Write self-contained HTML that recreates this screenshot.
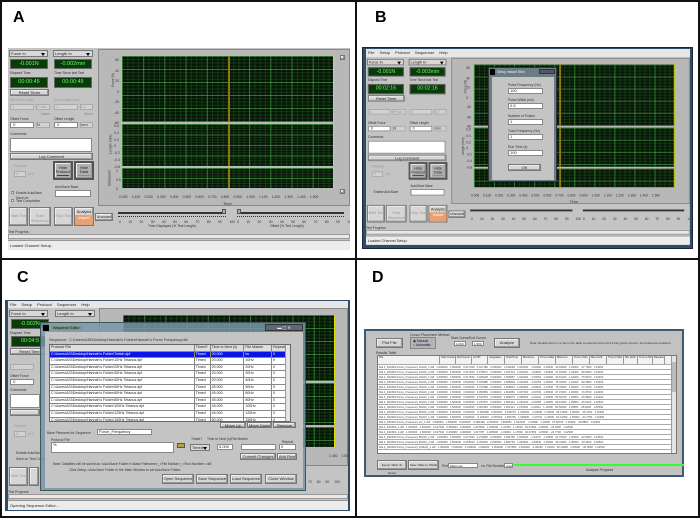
<!DOCTYPE html>
<html><head><meta charset="utf-8">
<style>
*{box-sizing:border-box;margin:0;padding:0}
body{width:700px;height:518px;background:#fff;position:relative;overflow:hidden;font-family:"Liberation Sans",sans-serif;color:#222}
.a{position:absolute}
.L{position:absolute;font-weight:bold;font-size:16px;color:#000}
.lv{position:absolute;width:342px;height:202px;background:#c4c4c4;font-size:3.4px;transform-origin:0 0;overflow:hidden}
.dd{position:absolute;background:#d8d8d8;border:1px solid #777;height:7px;font-size:4px;padding-left:1px;line-height:5px}
.dd:after{content:"";position:absolute;right:2px;top:1.5px;border:2px solid transparent;border-top:3px solid #000}
.g{position:absolute;background:#0b3a0b;border:1px solid #666;color:#6f6;font-size:5.5px;text-align:center;line-height:9px}
.bt{position:absolute;background:#d6d6d6;border:1px solid #777;text-align:center;font-size:4px;box-shadow:inset -1px -1px #999,inset 1px 1px #eee}
.f{position:absolute;background:#fff;border:1px solid #888;height:6px;font-size:4px;line-height:4px;padding-left:1px}
.fd{position:absolute;background:#d2d2d2;border:1px solid #aaa;height:6px;color:#999;font-size:4px;line-height:4px}
.t{position:absolute;white-space:nowrap;font-size:3.4px;color:#333}
.pl{position:absolute;left:114px;width:212px;background-color:#061606;
background-image:linear-gradient(90deg,rgba(70,170,70,.55) 1px,transparent 1px),linear-gradient(rgba(70,170,70,.55) 1px,transparent 1px),linear-gradient(90deg,rgba(50,110,50,.35) 1px,transparent 1px),linear-gradient(rgba(50,110,50,.35) 1px,transparent 1px);
background-size:21.2px 13px,21.2px 13px,5.3px 3.25px,5.3px 3.25px;border-right:1px solid #dd0}
.yl{position:absolute;left:106px;width:2px;top:0;bottom:0;background:#8a7a10}
.tab{position:absolute;border:1px solid #666;background:#fff;overflow:hidden}
.row{height:6.6px;border-bottom:1px solid #888;font-size:3.6px;line-height:5.6px;white-space:nowrap;display:flex}
.row span{border-right:1px solid #888;padding-left:1px;overflow:hidden}
.dr{height:5px;border-bottom:1px solid #aaa;font-size:2.6px;line-height:4px;white-space:nowrap;display:flex}
.dr span{border-right:1px solid #999;overflow:hidden;padding-left:1px;flex:none}
</style></head><body>
<!-- frame lines -->
<div class="a" style="left:0;top:0;width:700px;height:518px;border:2px solid #111"></div>
<div class="a" style="left:355px;top:0;width:2px;height:518px;background:#111"></div>
<div class="a" style="left:0;top:258px;width:700px;height:2px;background:#111"></div>
<div class="L" style="left:13px;top:9px">A</div>
<div class="L" style="left:375px;top:9px">B</div>
<div class="L" style="left:17px;top:269px">C</div>
<div class="L" style="left:372px;top:269px">D</div>

<!-- PANEL A -->
<div class="lv" style="left:8px;top:48px">
<div class="dd" style="left:1px;top:2px;width:39px">Force In</div>
<div class="dd" style="left:45px;top:2px;width:40px">Length In</div>
<div class="g" style="left:2px;top:11px;width:38px;height:10px">-0.001N</div>
<div class="g" style="left:46px;top:11px;width:38px;height:10px">-0.002mm</div>
<div class="t" style="left:2px;top:23px">Elapsed Time</div><div class="t" style="left:46px;top:23px">Time Since last Test</div>
<div class="g" style="left:2px;top:29px;width:38px;height:11px">00:00:45</div>
<div class="g" style="left:46px;top:29px;width:38px;height:11px">00:00:45</div>
<div class="bt" style="left:2px;top:41px;width:39px;height:7px">Reset Timer</div>
<div class="t" style="left:2px;top:50px;color:#999">Ref Force (mN)</div><div class="t" style="left:46px;top:50px;color:#999">Ref Length (mm)</div>
<div class="fd" style="left:2px;top:56px;width:24px">&nbsp;1</div><div class="fd" style="left:28px;top:56px;width:14px">Fmax</div>
<div class="fd" style="left:46px;top:56px;width:24px">&nbsp;1</div><div class="fd" style="left:72px;top:56px;width:13px">Lo</div>
<div class="t" style="left:33px;top:64px;color:#888">Name</div><div class="t" style="left:76px;top:64px;color:#888">Name</div>
<div class="t" style="left:2px;top:69px">Offset Force</div><div class="t" style="left:46px;top:69px">Offset Length</div>
<div class="f" style="left:2px;top:74px;width:24px">&nbsp;0</div><div class="fd" style="left:28px;top:74px;width:14px;color:#333">N</div>
<div class="f" style="left:46px;top:74px;width:24px">&nbsp;0</div><div class="fd" style="left:72px;top:74px;width:13px;color:#333">mm</div>
<div class="t" style="left:2px;top:84px">Comments</div>
<div class="f" style="left:2px;top:90px;width:82px;height:14px"></div>
<div class="bt" style="left:2px;top:105px;width:83px;height:7px">Log Comment</div>
<div class="t" style="left:6px;top:116px;color:#999">Protocol</div>
<div class="fd" style="left:6px;top:123px;width:12px">&nbsp;0</div><div class="t" style="left:20px;top:124px;color:#999">of 0</div>
<div class="bt" style="left:45px;top:113px;width:20px;height:19px;background:#b0b0b0;border:2px solid #555;padding-top:3px;line-height:4px">Hide Protocol<div style="height:1px;background:#d00;margin:1px 2px"></div></div>
<div class="bt" style="left:66px;top:113px;width:20px;height:19px;background:#b0b0b0;border:2px solid #555;padding-top:3px;line-height:4px">Hide Data<div style="height:1px;background:#3c3;margin:1px 2px"></div></div>
<div class="t" style="left:47px;top:137px">AutoSave Base</div>
<div class="f" style="left:47px;top:142px;width:36px;height:7px"></div>
<div class="f" style="left:3px;top:143px;width:3px;height:3px"></div><div class="t" style="left:8px;top:143px">Enable AutoSave</div>
<div class="f" style="left:3px;top:151px;width:3px;height:3px"></div><div class="t" style="left:8px;top:149px;line-height:3px">Save on<br>Test Completion</div>
<div class="bt" style="left:1px;top:159px;width:19px;height:19px;color:#999;padding-top:5px">Start Test</div>
<div class="bt" style="left:21px;top:159px;width:22px;height:19px;color:#999;padding-top:5px">Start Sequence</div>
<div class="bt" style="left:46px;top:159px;width:19px;height:19px;color:#999;padding-top:5px">Stop Test</div>
<div class="bt" style="left:66px;top:159px;width:20px;height:19px;padding-top:1px">Analysis<div style="position:absolute;left:0;right:0;bottom:0;height:10px;background:#e8a070;color:#fff">Import</div></div>
<div class="bt" style="left:87px;top:165px;width:18px;height:8px">Unzoom</div>
<div class="a" style="left:110px;top:164px;width:108px;height:2px;background:#333"></div>
<div class="a" style="left:229px;top:164px;width:107px;height:2px;background:#333"></div>
<div class="a" style="left:214px;top:161px;width:4px;height:5px;background:#aaa;border:1px solid #555"></div>
<div class="a" style="left:229px;top:161px;width:4px;height:5px;background:#aaa;border:1px solid #555"></div>
<div class="a" style="left:110px;top:168px;width:108px;height:2px;border-top:1px dotted #333"></div>
<div class="a" style="left:229px;top:168px;width:107px;height:2px;border-top:1px dotted #333"></div>
<div class="t" style="left:111px;top:172px;word-spacing:6.5px">0 10 20 30 40 50 60 70 80 90 100</div>
<div class="t" style="left:229px;top:172px;word-spacing:6.5px">0 10 20 30 40 50 60 70 80 90 100</div>
<div class="t" style="left:140px;top:176px">Time Displayed (% Test Length)</div>
<div class="t" style="left:262px;top:176px">Offset (% Test Length)</div>
<div class="t" style="left:0;top:182px">Test Progress</div>
<div class="a" style="left:0;top:186px;width:342px;height:5px;background:#e8e8e8;border:1px solid #999"></div>
<div class="a" style="left:0;top:192px;width:342px;height:10px;background:#ececec;border-top:1px solid #999;font-size:4px;line-height:9px;padding-left:2px">Loaded Channel Setup.</div>
<div class="a" style="left:90px;top:1px;width:252px;height:157px;background:#b8b8b8;border:1px solid #888">
<div class="pl" style="left:23px;top:6px;height:66px"><div class="yl"></div></div>
<div class="pl" style="left:23px;top:74px;height:42px;background-size:21.2px 10.5px,21.2px 10.5px,5.3px 2.6px,5.3px 2.6px"><div class="yl"></div></div>
<div class="pl" style="left:23px;top:118px;height:20px;background-size:21.2px 10px,21.2px 10px,5.3px 2.5px,5.3px 2.5px"><div class="yl"></div></div>
<div class="t" style="left:7px;top:28px;transform:rotate(-90deg)">Force (N)</div>
<div class="t" style="left:2px;top:92px;transform:rotate(-90deg)">Length (mm)</div>
<div class="t" style="left:2px;top:126px;transform:rotate(-90deg)">Stimulation</div>
<div class="t" style="left:15px;top:5px;line-height:10.5px;text-align:right">60<br>40<br>20<br>0<br>-20<br>-40<br>-60</div>
<div class="t" style="left:15px;top:73px;line-height:6.8px">0.6<br>0.4<br>0.2<br>0<br>-0.2<br>-0.4<br>-0.6</div>
<div class="t" style="left:17px;top:117px;line-height:9px">1<br>0.5<br>0</div>
<div class="t" style="left:20px;top:145px;word-spacing:3.3px">0.000 0.100 0.200 0.300 0.400 0.500 0.600 0.700 0.800 0.900 1.000 1.100 1.200 1.300 1.400 1.500</div>
<div class="t" style="left:124px;top:151px;font-size:4px">Time</div>
<div class="bt" style="left:241px;top:5px;width:5px;height:5px"></div>
<div class="bt" style="left:241px;top:139px;width:5px;height:5px"></div>
</div>
</div>

<!-- PANEL B -->
<div class="a" style="left:362px;top:47px;width:331px;height:202px;background:#2e4d68;border:1px solid #18283a"></div>
<div class="a" style="left:366px;top:49px;width:324px;height:8px;background:#e6e6e6;font-size:4px;line-height:8px;padding-left:2px;word-spacing:4px">File Setup Protocol Sequencer Help</div>
<div class="lv" style="left:366px;top:57px;transform:scale(0.947,0.93)">
<div class="dd" style="left:1px;top:2px;width:39px">Force In</div>
<div class="dd" style="left:45px;top:2px;width:40px">Length In</div>
<div class="g" style="left:2px;top:11px;width:38px;height:10px">-0.001N</div>
<div class="g" style="left:46px;top:11px;width:38px;height:10px">-0.003mm</div>
<div class="t" style="left:2px;top:23px">Elapsed Time</div><div class="t" style="left:46px;top:23px">Time Since last Test</div>
<div class="g" style="left:2px;top:29px;width:38px;height:11px">00:02:16</div>
<div class="g" style="left:46px;top:29px;width:38px;height:11px">00:02:16</div>
<div class="bt" style="left:2px;top:41px;width:39px;height:7px">Reset Timer</div>
<div class="fd" style="left:2px;top:56px;width:24px">&nbsp;1</div><div class="fd" style="left:28px;top:56px;width:14px">Fmax</div>
<div class="fd" style="left:46px;top:56px;width:24px">&nbsp;1</div><div class="fd" style="left:72px;top:56px;width:13px">L0</div>
<div class="t" style="left:2px;top:69px">Offset Force</div><div class="t" style="left:46px;top:69px">Offset Length</div>
<div class="f" style="left:2px;top:74px;width:24px">&nbsp;0</div><div class="fd" style="left:28px;top:74px;width:14px;color:#333">N</div>
<div class="f" style="left:46px;top:74px;width:24px">&nbsp;0</div><div class="fd" style="left:72px;top:74px;width:13px;color:#333">mm</div>
<div class="t" style="left:2px;top:84px">Comments</div>
<div class="f" style="left:2px;top:90px;width:82px;height:14px"></div>
<div class="bt" style="left:2px;top:105px;width:83px;height:7px">Log Comment</div>
<div class="t" style="left:6px;top:116px;color:#999">Protocol</div>
<div class="fd" style="left:6px;top:123px;width:12px">&nbsp;0</div><div class="t" style="left:20px;top:124px;color:#999">of 0</div>
<div class="bt" style="left:45px;top:113px;width:20px;height:19px;background:#b0b0b0;border:2px solid #555;padding-top:3px;line-height:4px">Hide Protocol<div style="height:1px;background:#d00;margin:1px 2px"></div></div>
<div class="bt" style="left:66px;top:113px;width:20px;height:19px;background:#b0b0b0;border:2px solid #555;padding-top:3px;line-height:4px">Hide Data<div style="height:1px;background:#3c3;margin:1px 2px"></div></div>
<div class="t" style="left:47px;top:137px">AutoSave Base</div>
<div class="f" style="left:47px;top:142px;width:36px;height:7px"></div>
<div class="t" style="left:8px;top:143px">Enable AutoSave</div>
<div class="bt" style="left:1px;top:159px;width:19px;height:19px;color:#999;padding-top:5px">Start Test</div>
<div class="bt" style="left:21px;top:159px;width:22px;height:19px;color:#999;padding-top:5px">Start Sequence</div>
<div class="bt" style="left:46px;top:159px;width:19px;height:19px;color:#999;padding-top:5px">Stop Test</div>
<div class="bt" style="left:66px;top:159px;width:20px;height:19px;padding-top:1px">Analysis<div style="position:absolute;left:0;right:0;bottom:0;height:10px;background:#e8a070;color:#fff">Import</div></div>
<div class="bt" style="left:87px;top:165px;width:18px;height:8px">Unzoom</div>
<div class="a" style="left:110px;top:164px;width:108px;height:2px;background:#333"></div>
<div class="a" style="left:229px;top:164px;width:107px;height:2px;background:#333"></div>
<div class="t" style="left:111px;top:172px;word-spacing:6.5px">0 10 20 30 40 50 60 70 80 90 100</div>
<div class="t" style="left:229px;top:172px;word-spacing:6.5px">0 10 20 30 40 50 60 70 80 90 100</div>
<div class="t" style="left:0;top:182px">Test Progress</div>
<div class="a" style="left:0;top:186px;width:342px;height:5px;background:#e8e8e8;border:1px solid #999"></div>
<div class="a" style="left:0;top:192px;width:342px;height:10px;background:#ececec;border-top:1px solid #999;font-size:4px;line-height:9px;padding-left:2px">Loaded Channel Setup.</div>
<div class="a" style="left:90px;top:1px;width:252px;height:157px;background:#b8b8b8;border:1px solid #888">
<div class="pl" style="left:23px;top:6px;height:66px"><div class="yl" style="left:90px"></div></div>
<div class="pl" style="left:23px;top:74px;height:42px"><div class="yl" style="left:90px"></div></div>
<div class="pl" style="left:23px;top:118px;height:20px"><div class="yl" style="left:90px"></div></div>
<div class="t" style="left:7px;top:28px;transform:rotate(-90deg)">Force (N)</div>
<div class="t" style="left:2px;top:92px;transform:rotate(-90deg)">Length (mm)</div>
<div class="t" style="left:15px;top:5px;line-height:10.5px">60<br>40<br>20<br>0<br>-20<br>-40<br>-60</div>
<div class="t" style="left:15px;top:73px;line-height:6.8px">0.6<br>0.4<br>0.2<br>0<br>-0.2<br>-0.4<br>-0.6</div>
<div class="t" style="left:20px;top:145px;word-spacing:3.3px">0.000 0.100 0.200 0.300 0.400 0.500 0.600 0.700 0.800 0.900 1.000 1.100 1.200 1.300 1.400 1.500</div>
<div class="t" style="left:124px;top:151px;font-size:4px">Time</div>
</div>
</div>
<!-- B dialog -->
<div class="a" style="left:488px;top:67px;width:69px;height:115px;background:#6b7c86;border:1px solid #333">
<div class="a" style="left:1px;top:1px;width:5px;height:6px;background:#000"></div>
<div class="t" style="left:8px;top:2px;color:#eee;font-size:3.4px">Setup Instant Stim</div>
<div class="a" style="left:50px;top:1px;width:16px;height:5px;background:#556;border:1px solid #333"></div>
<div class="a" style="left:3px;top:9px;width:62px;height:103px;background:#c4c4c4">
<div class="t" style="left:16px;top:6px">Pulse Frequency (Hz)</div>
<div class="f" style="left:16px;top:11px;width:35px">100</div>
<div class="t" style="left:16px;top:21px">Pulse Width (ms)</div>
<div class="f" style="left:16px;top:26px;width:35px">0.5</div>
<div class="t" style="left:16px;top:37px">Number of Pulses</div>
<div class="f" style="left:16px;top:42px;width:35px">1</div>
<div class="t" style="left:16px;top:52px">Train Frequency (Hz)</div>
<div class="f" style="left:16px;top:57px;width:35px">1</div>
<div class="t" style="left:16px;top:68px">Run Time (s)</div>
<div class="f" style="left:16px;top:73px;width:35px">100</div>
<div class="bt" style="left:16px;top:87px;width:33px;height:7px">OK</div>
</div></div>

<!-- PANEL C -->
<div class="a" style="left:5px;top:300px;width:345px;height:211px;background:#2e4d68"></div>
<div class="a" style="left:8px;top:301px;width:340px;height:7px;background:#e6e6e6;font-size:4px;line-height:7px;padding-left:2px;word-spacing:4px">File Setup Protocol Sequencer Help</div>
<div class="lv" style="left:8px;top:308px;width:340px">
<div class="dd" style="left:1px;top:2px;width:39px">Force In</div>
<div class="dd" style="left:47px;top:2px;width:40px">Length In</div>
<div class="g" style="left:3px;top:11px;width:38px;height:10px">-0.002N</div>
<div class="t" style="left:2px;top:23px">Elapsed Time</div>
<div class="g" style="left:3px;top:28px;width:38px;height:11px">00:04:5</div>
<div class="bt" style="left:2px;top:40px;width:39px;height:7px">Reset Time</div>
<div class="fd" style="left:2px;top:56px;width:24px">&nbsp;1</div>
<div class="t" style="left:2px;top:66px">Offset Force</div>
<div class="f" style="left:2px;top:71px;width:24px">&nbsp;0</div>
<div class="t" style="left:2px;top:80px">Comments</div>
<div class="f" style="left:2px;top:86px;width:30px;height:14px"></div>
<div class="bt" style="left:2px;top:101px;width:30px;height:7px"></div>
<div class="t" style="left:6px;top:116px;color:#999">Protocol</div>
<div class="fd" style="left:6px;top:123px;width:12px">&nbsp;0</div><div class="t" style="left:20px;top:124px;color:#999">of 0</div>
<div class="t" style="left:8px;top:143px">Enable AutoSave</div>
<div class="t" style="left:8px;top:149px">Save on Test Completion</div>
<div class="bt" style="left:1px;top:159px;width:19px;height:19px;color:#999;padding-top:5px">Start Test</div>
<div class="bt" style="left:21px;top:159px;width:10px;height:19px;color:#999"></div>
<div class="t" style="left:0;top:182px">Test Progress</div>
<div class="a" style="left:0;top:186px;width:340px;height:5px;background:#e8e8e8;border:1px solid #999"></div>
<div class="a" style="left:0;top:192px;width:340px;height:10px;background:#ececec;border-top:1px solid #999;font-size:4px;line-height:9px;padding-left:2px">Opening Sequence Editor...</div>
<div class="a" style="left:91px;top:0;width:249px;height:158px;background:#b8b8b8;border:1px solid #888">
<div class="pl" style="left:23px;top:6px;height:66px"></div>
<div class="pl" style="left:23px;top:74px;height:42px"></div>
<div class="pl" style="left:23px;top:118px;height:20px"></div>
<div class="t" style="left:229px;top:145px;word-spacing:3px">1.400 1.500</div>
</div>
<div class="t" style="left:300px;top:172px;word-spacing:4px">70 80 90 100</div>
</div>
<!-- Sequence editor dialog -->
<div class="a" style="left:40px;top:322px;width:266px;height:169px;background:rgba(120,150,170,.85);border:1px solid #455">
<div class="a" style="left:2px;top:2px;width:6px;height:6px;background:#000"></div>
<div class="t" style="left:10px;top:3px;color:#111;font-size:3.6px;background:#7a9a80;padding:0 2px">Sequence Editor</div>
<div class="a" style="left:224px;top:1px;width:38px;height:7px;background:#5a6a7a;border:1px solid #333;color:#fff;font-size:4px;text-align:center;line-height:5px">▬ ▢ ✕</div>
<div class="a" style="left:4px;top:9px;width:258px;height:156px;background:#c4c4c4">
<div class="t" style="left:4px;top:6px;font-size:3.8px">Sequence: &nbsp;C:\Users\ASI\Desktop\Hannah's Folder\Hannah's Force Frequency.dsf</div>
<div class="tab" style="left:4px;top:12px;width:242px;height:78px">
<div class="row" style="background:#ddd"><span style="width:146px">Protocol File</span><span style="width:16px">Timed?</span><span style="width:34px">Time to Next (s)</span><span style="width:28px">File Marker</span><span style="width:18px">Repeat</span></div>
<div class="row" style="background:#0a14e8;color:#fff"><span style="width:146px">C:\Users\ASI\Desktop\Hannah's Folder\Twitch.dpf</span><span style="width:16px">Timed</span><span style="width:34px">20.000</span><span style="width:28px">tw</span><span style="width:18px">0</span></div>
<div class="row"><span style="width:146px">C:\Users\ASI\Desktop\Hannah's Folder\10Hz Tetanus.dpf</span><span style="width:16px">Timed</span><span style="width:34px">20.000</span><span style="width:28px">10Hz</span><span style="width:18px">0</span></div>
<div class="row"><span style="width:146px">C:\Users\ASI\Desktop\Hannah's Folder\20Hz Tetanus.dpf</span><span style="width:16px">Timed</span><span style="width:34px">20.000</span><span style="width:28px">20Hz</span><span style="width:18px">0</span></div>
<div class="row"><span style="width:146px">C:\Users\ASI\Desktop\Hannah's Folder\30Hz Tetanus.dpf</span><span style="width:16px">Timed</span><span style="width:34px">20.000</span><span style="width:28px">30Hz</span><span style="width:18px">0</span></div>
<div class="row"><span style="width:146px">C:\Users\ASI\Desktop\Hannah's Folder\40Hz Tetanus.dpf</span><span style="width:16px">Timed</span><span style="width:34px">20.000</span><span style="width:28px">40Hz</span><span style="width:18px">0</span></div>
<div class="row"><span style="width:146px">C:\Users\ASI\Desktop\Hannah's Folder\50Hz Tetanus.dpf</span><span style="width:16px">Timed</span><span style="width:34px">45.000</span><span style="width:28px">50Hz</span><span style="width:18px">0</span></div>
<div class="row"><span style="width:146px">C:\Users\ASI\Desktop\Hannah's Folder\60Hz Tetanus.dpf</span><span style="width:16px">Timed</span><span style="width:34px">45.000</span><span style="width:28px">60Hz</span><span style="width:18px">0</span></div>
<div class="row"><span style="width:146px">C:\Users\ASI\Desktop\Hannah's Folder\80Hz Tetanus.dpf</span><span style="width:16px">Timed</span><span style="width:34px">45.000</span><span style="width:28px">80Hz</span><span style="width:18px">0</span></div>
<div class="row"><span style="width:146px">C:\Users\ASI\Desktop\Hannah's Folder\100Hz Tetanus.dpf</span><span style="width:16px">Timed</span><span style="width:34px">45.000</span><span style="width:28px">100Hz</span><span style="width:18px">0</span></div>
<div class="row"><span style="width:146px">C:\Users\ASI\Desktop\Hannah's Folder\125Hz Tetanus.dpf</span><span style="width:16px">Timed</span><span style="width:34px">45.000</span><span style="width:28px">125Hz</span><span style="width:18px">0</span></div>
<div class="row"><span style="width:146px">C:\Users\ASI\Desktop\Hannah's Folder\150Hz Tetanus.dpf</span><span style="width:16px">Timed</span><span style="width:34px">60.000</span><span style="width:28px">150Hz</span><span style="width:18px">0</span></div>
<div class="a" style="right:0;top:0;width:5px;height:78px;background:#e4e4e4;border-left:1px solid #999"></div>
</div>
<div class="bt" style="left:175px;top:90px;width:26px;height:6px">Move Up</div>
<div class="bt" style="left:202px;top:90px;width:25px;height:6px">Move Down</div>
<div class="bt" style="left:228px;top:90px;width:23px;height:6px">Remove</div>
<div class="t" style="left:2px;top:99px">Base Filename for Sequence</div>
<div class="f" style="left:52px;top:97px;width:55px">Force_Frequency</div>
<div class="t" style="left:6px;top:106px">Protocol File</div>
<div class="f" style="left:6px;top:110px;width:123px;height:11px">%</div>
<div class="a" style="left:132px;top:111px;width:8px;height:5px;background:#b8a040;border:1px solid #555"></div>
<div class="t" style="left:146px;top:105px">Timed?</div><div class="t" style="left:162px;top:105px">Time to Next (s)</div><div class="t" style="left:186px;top:105px">File Marker</div><div class="t" style="left:237px;top:108px">Repeat</div>
<div class="dd" style="left:145px;top:112px;width:20px">Timed</div>
<div class="f" style="left:172px;top:112px;width:16px">5.000</div>
<div class="f" style="left:196px;top:112px;width:35px"></div>
<div class="f" style="left:234px;top:112px;width:17px">0</div>
<div class="bt" style="left:195px;top:121px;width:36px;height:7px">Commit Changes</div>
<div class="bt" style="left:232px;top:121px;width:20px;height:7px">Add Row</div>
<div class="t" style="left:8px;top:130px">Note: Datafiles will be saved as &lt;AutoSave Folder&gt;\&lt;Base Filename&gt;_&lt;File Marker&gt;_&lt;Run Number&gt;.ddf</div>
<div class="t" style="left:24px;top:136px">Click Setup-&gt;AutoSave Folder in the Main Window to set AutoSave Folder.</div>
<div class="bt" style="left:117px;top:142px;width:32px;height:10px;line-height:8px">Open Sequence</div>
<div class="bt" style="left:151px;top:142px;width:32px;height:10px;line-height:8px">Save Sequence</div>
<div class="bt" style="left:185px;top:142px;width:32px;height:10px;line-height:8px">Load Sequence</div>
<div class="bt" style="left:220px;top:142px;width:32px;height:10px;line-height:8px">Close Window</div>
</div></div>

<!-- PANEL D -->
<div class="a" style="left:364px;top:329px;width:320px;height:148px;background:#c2c2c2;border:2px solid #3e5a70;font-size:3.4px">
<div class="bt" style="left:10px;top:7px;width:27px;height:10px;line-height:8px">Plot File</div>
<div class="t" style="left:44px;top:2px">Cursor Placement Method</div>
<div class="a" style="left:44px;top:6px;width:26px;height:12px;background:#b4b4b4;border:1px solid #888"><div class="t" style="left:2px;top:1px;line-height:4px;color:#113">◉ Manual<br>○ Automatic</div></div>
<div class="t" style="left:85px;top:5px">Start Cursor</div><div class="t" style="left:103px;top:5px">End Cursor</div>
<div class="f" style="left:88px;top:10px;width:12px;height:5px;font-size:3px">1.000</div>
<div class="f" style="left:106px;top:10px;width:12px;height:5px;font-size:3px">1.500</div>
<div class="bt" style="left:128px;top:7px;width:26px;height:10px;line-height:8px">Analyze</div>
<div class="t" style="left:164px;top:10px;font-size:3px">Note: Double-click on a row in the table to examine that row's Fmin graph cursors, and tolerance locations.</div>
<div class="t" style="left:10px;top:20px">Results Table</div>
<div class="tab" style="left:11px;top:24px;width:300px;height:99px;border-color:#777">
<div class="dr" style="height:9px;background:#f2f2f2"><span style="width:62px">File</span><span style="width:16px">Start Cursor</span><span style="width:16px">End Cursor</span><span style="width:16px">1/2 RT</span><span style="width:17px">Integration</span><span style="width:17px">Total Time</span><span style="width:17px">Maximum</span><span style="width:17px">Time to Max</span><span style="width:17px">Minimum</span><span style="width:17px">Time to Min</span><span style="width:17px">Max dx/dt</span><span style="width:17px">Time to Max dx/dt</span><span style="width:14px">Min dx/dt</span><span style="width:15px">Time to Min dx/dt</span><span style="width:12px">Baseline</span></div>
<div style="height:86px;background:repeating-linear-gradient(#fff 0,#fff 4px,#aaa 4px,#aaa 5px),repeating-linear-gradient(90deg,transparent 0,transparent 62px,#999 62px,#999 63px);position:relative;overflow:hidden">
<div class="t" style="left:1px;top:0;font-size:2.7px;line-height:5px;color:#444">Rat 4_D40603 Force_Frequency 10Hz0_1.ddf &nbsp; 1.000000 &nbsp; 1.500000 &nbsp; 0.017540 &nbsp; 0.047180 &nbsp; 2.000000 &nbsp; 1.435290 &nbsp; 1.042000 &nbsp; -1.00460 &nbsp; 1.45000 &nbsp; 19.63650 &nbsp; 1.04500 &nbsp; -37.7480 &nbsp; 1.03450<br>Rat 4_D40603 Force_Frequency 10Hz0_2.ddf &nbsp; 1.000000 &nbsp; 1.500000 &nbsp; 0.017540 &nbsp; 0.078371 &nbsp; 2.000000 &nbsp; 1.497312 &nbsp; 1.042000 &nbsp; -1.00062 &nbsp; 1.46300 &nbsp; 37.22045 &nbsp; 1.04400 &nbsp; -56.8690 &nbsp; 1.03400<br>Rat 4_D40603 Force_Frequency 20Hz0_1.ddf &nbsp; 1.000000 &nbsp; 1.500000 &nbsp; 0.017540 &nbsp; 0.048128 &nbsp; 2.000000 &nbsp; 1.353867 &nbsp; 1.042000 &nbsp; -1.00052 &nbsp; 1.46300 &nbsp; 34.61240 &nbsp; 1.04300 &nbsp; -75.8670 &nbsp; 1.03400<br>Rat 4_D40603 Force_Frequency 20Hz0_2.ddf &nbsp; 1.000000 &nbsp; 1.500000 &nbsp; 0.018040 &nbsp; 0.015386 &nbsp; 2.000000 &nbsp; 1.488639 &nbsp; 1.040000 &nbsp; -1.00163 &nbsp; 1.45000 &nbsp; 76.34050 &nbsp; 1.04400 &nbsp; -90.3850 &nbsp; 1.03200<br>Rat 4_D40603 Force_Frequency 30Hz0_1.ddf &nbsp; 1.000000 &nbsp; 1.500000 &nbsp; 0.018040 &nbsp; 2.737980 &nbsp; 2.000000 &nbsp; 1.668815 &nbsp; 1.045000 &nbsp; -1.00033 &nbsp; 1.17500 &nbsp; 75.33660 &nbsp; 1.05300 &nbsp; -77.4760 &nbsp; 1.03000<br>Rat 4_D40603 Force_Frequency 30Hz0_2.ddf &nbsp; 1.000000 &nbsp; 1.500000 &nbsp; 0.018040 &nbsp; 0.052959 &nbsp; 2.000000 &nbsp; 1.604852 &nbsp; 1.047000 &nbsp; -1.00700 &nbsp; 1.25000 &nbsp; 97.07300 &nbsp; 1.05200 &nbsp; -71.8700 &nbsp; 1.02000<br>Rat 4_D40603 Force_Frequency 40Hz0_1.ddf &nbsp; 1.000000 &nbsp; 1.500000 &nbsp; 0.018540 &nbsp; 2.547579 &nbsp; 2.000000 &nbsp; 1.689076 &nbsp; 1.058000 &nbsp; -1.00424 &nbsp; 1.19500 &nbsp; 83.84790 &nbsp; 1.05900 &nbsp; -26.8820 &nbsp; 1.04400<br>Rat 4_D40603 Force_Frequency 40Hz0_2.ddf &nbsp; 1.000000 &nbsp; 1.500000 &nbsp; 0.018540 &nbsp; 2.347870 &nbsp; 2.000000 &nbsp; 1.691941 &nbsp; 1.062000 &nbsp; -1.00455 &nbsp; 1.19000 &nbsp; 82.61060 &nbsp; 1.05800 &nbsp; -25.6400 &nbsp; 1.02500<br>Rat 4_D40603 Force_Frequency 50Hz0_1.ddf &nbsp; 1.000000 &nbsp; 1.500000 &nbsp; 0.018540 &nbsp; 0.003181 &nbsp; 2.000000 &nbsp; 1.654113 &nbsp; 1.070000 &nbsp; -1.00314 &nbsp; 1.14500 &nbsp; 84.56380 &nbsp; 1.05800 &nbsp; -28.8400 &nbsp; 1.02500<br>Rat 4_D40603 Force_Frequency 50Hz0_2.ddf &nbsp; 1.000000 &nbsp; 1.500000 &nbsp; 0.018540 &nbsp; -0.006080 &nbsp; 2.000000 &nbsp; 1.638716 &nbsp; 1.020000 &nbsp; -1.00638 &nbsp; 1.15000 &nbsp; 86.14820 &nbsp; 1.05000 &nbsp; -26.4750 &nbsp; 1.02500<br>Rat 4_D40603 Force_Frequency 60Hz0_1.ddf &nbsp; 1.000000 &nbsp; 1.500000 &nbsp; 0.018040 &nbsp; -0.025437 &nbsp; 2.000000 &nbsp; 1.592706 &nbsp; 1.025000 &nbsp; -1.00734 &nbsp; 1.13000 &nbsp; 92.31390 &nbsp; 1.05000 &nbsp; -24.7750 &nbsp; 1.02500<br>Rat 4_D40603 Force_Frequency tmt_1.ddf &nbsp; 1.000000 &nbsp; 1.500000 &nbsp; 0.018040 &nbsp; -0.081280 &nbsp; 2.000000 &nbsp; 1.582851 &nbsp; 1.027000 &nbsp; -1.00990 &nbsp; 1.13000 &nbsp; 97.96760 &nbsp; 1.05000 &nbsp; -25.8800 &nbsp; 1.02500<br>Rat 4_D40603_1.ddf &nbsp; 1.000000 &nbsp; 1.500000 &nbsp; 0.017540 &nbsp; 0.259904 &nbsp; 2.000000 &nbsp; 1.607839 &nbsp; 1.025000 &nbsp; -1.00762 &nbsp; 1.12500 &nbsp; 92.07650 &nbsp; 1.05000 &nbsp; -23.3000 &nbsp; 1.02500<br>Rat 4_D40603_2.ddf &nbsp; 1.000000 &nbsp; 1.500000 &nbsp; 0.017540 &nbsp; 0.252960 &nbsp; 2.000000 &nbsp; 1.617787 &nbsp; 1.025000 &nbsp; -1.00643 &nbsp; 1.17500 &nbsp; 92.07350 &nbsp; 1.05000 &nbsp; -22.7700 &nbsp; 1.02500<br>Rat 4_D40603 Force_Frequency 80Hz0_1.ddf &nbsp; 1.000000 &nbsp; 1.500000 &nbsp; 0.017540 &nbsp; 0.274830 &nbsp; 2.000000 &nbsp; 1.684752 &nbsp; 1.025000 &nbsp; -1.00470 &nbsp; 1.12500 &nbsp; 91.79320 &nbsp; 1.05000 &nbsp; -32.8900 &nbsp; 1.02500<br>Rat 4_D40603 Force_Frequency 80Hz0_2.ddf &nbsp; 1.000000 &nbsp; 1.500000 &nbsp; 0.018040 &nbsp; 2.290252 &nbsp; 2.000000 &nbsp; 1.684792 &nbsp; 1.023000 &nbsp; -1.00640 &nbsp; 1.15000 &nbsp; 95.41960 &nbsp; 1.05000 &nbsp; -33.4800 &nbsp; 1.02500<br>Rat 4_D40603 Force_Frequency 100Hz0_1.ddf &nbsp; 1.000000 &nbsp; 1.500000 &nbsp; 0.018040 &nbsp; 1.500032 &nbsp; 2.000000 &nbsp; 1.537853 &nbsp; 1.023000 &nbsp; -1.00180 &nbsp; 1.15000 &nbsp; 96.14820 &nbsp; 1.05000 &nbsp; -36.3850 &nbsp; 1.02500</div>
</div>
<div class="a" style="right:0;top:0;width:5px;height:97px;background:#e4e4e4;border-left:1px solid #999"><div style="margin-top:6px;height:30px;background:#bbb"></div></div>
</div>
<div class="bt" style="left:11px;top:129px;width:30px;height:10px;line-height:8px;font-size:3px">Export Table To Excel</div>
<div class="bt" style="left:42px;top:129px;width:31px;height:10px;line-height:8px;font-size:3px">Save Table to NSCE</div>
<div class="t" style="left:76px;top:133px">Plot</div>
<div class="f" style="left:82px;top:132px;width:30px;height:5px;font-size:3px">Maximum</div>
<div class="t" style="left:115px;top:133px">vs. File Number</div>
<div class="f" style="left:138px;top:132px;width:9px;height:5px;font-size:3px">Auto</div>
<div class="a" style="left:148px;top:133px;width:170px;height:2px;background:#3f3"></div>
<div class="t" style="left:220px;top:137px">Analysis Progress</div>
</div>
</body></html>
